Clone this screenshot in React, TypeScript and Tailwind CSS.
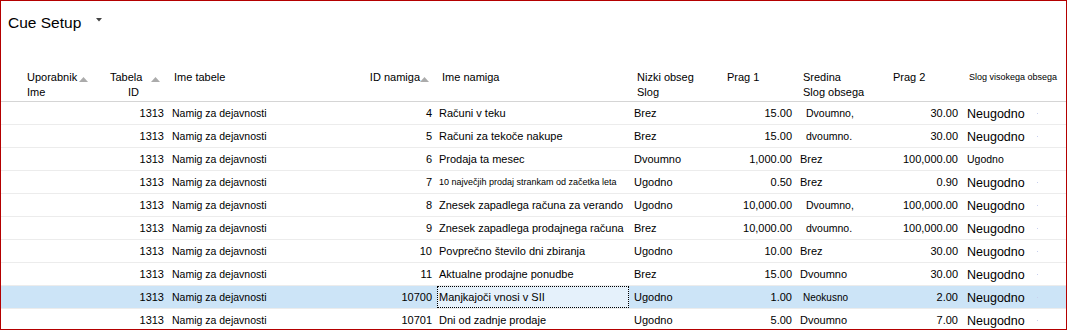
type Row = {
  table: string;
  id: string;
  name: string;
  nameSmall?: boolean;
  low: string;
  p1: string;
  mid: string;
  midShift?: boolean;
  midSmall?: boolean;
  p2: string;
  high: string;
  highSmall?: boolean;
  selected?: boolean;
};

const rows: Row[] = [
  { table: '1313', id: '4', name: 'Računi v teku', low: 'Brez', p1: '15.00', mid: 'Dvoumno,', midShift: true, p2: '30.00', high: 'Neugodno' },
  { table: '1313', id: '5', name: 'Računi za tekoče nakupe', low: 'Brez', p1: '15.00', mid: 'dvoumno.', midShift: true, p2: '30.00', high: 'Neugodno' },
  { table: '1313', id: '6', name: 'Prodaja ta mesec', low: 'Dvoumno', p1: '1,000.00', mid: 'Brez', p2: '100,000.00', high: 'Ugodno', highSmall: true },
  { table: '1313', id: '7', name: '10 največjih prodaj strankam od začetka leta', nameSmall: true, low: 'Ugodno', p1: '0.50', mid: 'Brez', p2: '0.90', high: 'Neugodno' },
  { table: '1313', id: '8', name: 'Znesek zapadlega računa za verando', low: 'Ugodno', p1: '10,000.00', mid: 'Dvoumno,', midShift: true, p2: '100,000.00', high: 'Neugodno' },
  { table: '1313', id: '9', name: 'Znesek zapadlega prodajnega računa', low: 'Brez', p1: '10,000.00', mid: 'dvoumno.', midShift: true, p2: '100,000.00', high: 'Neugodno' },
  { table: '1313', id: '10', name: 'Povprečno število dni zbiranja', low: 'Ugodno', p1: '10.00', mid: 'Brez', p2: '30.00', high: 'Neugodno' },
  { table: '1313', id: '11', name: 'Aktualne prodajne ponudbe', low: 'Brez', p1: '15.00', mid: 'Dvoumno', p2: '30.00', high: 'Neugodno' },
  { table: '1313', id: '10700', name: 'Manjkajoči vnosi v SII', low: 'Ugodno', p1: '1.00', mid: 'Neokusno', midSmall: true, p2: '2.00', high: 'Neugodno', selected: true },
  { table: '1313', id: '10701', name: 'Dni od zadnje prodaje', low: 'Ugodno', p1: '5.00', mid: 'Dvoumno', p2: '7.00', high: 'Neugodno' },
];

const cols = 'grid grid-cols-[99px_68px_192px_77px_192px_83px_84px_84px_82px_1fr]';

function SortUp({ className }: { className?: string }) {
  return (
    <svg width="9" height="5" viewBox="0 0 9 5" className={className}>
      <polygon points="0,5 4.5,0 9,5" fill="#ababab" />
    </svg>
  );
}

function Header() {
  return (
    <div className={`${cols} h-[39px] border-b border-[#d5d5d5] pt-[7px] text-[11px] leading-[15px] text-black`}>
      <div className="pl-[26px]">
        <div className="flex items-center">
          <span>Uporabnik</span>
          <SortUp className="ml-[2px] mt-[3px]" />
        </div>
        <div>Ime</div>
      </div>
      <div className="pl-[10px]">
        <div className="flex items-center">
          <span>Tabela</span>
          <SortUp className="ml-[9px] mt-[3px]" />
        </div>
        <div className="pl-[18px]">ID</div>
      </div>
      <div className="pl-[6px]">Ime tabele</div>
      <div className="flex justify-end pr-[8px]">
        <div className="flex h-[15px] items-center">
          <span>ID namiga</span>
          <SortUp className="mt-[3px]" />
        </div>
      </div>
      <div className="pl-[5px]">Ime namiga</div>
      <div className="pl-[8px]">
        <div>Nizki obseg</div>
        <div>Slog</div>
      </div>
      <div className="pl-[15px]">Prag 1</div>
      <div className="pl-[7px]">
        <div>Sredina</div>
        <div>Slog obsega</div>
      </div>
      <div className="pl-[13px]">Prag 2</div>
      <div className="pl-[7px] text-[9px]">Slog visokega obsega</div>
    </div>
  );
}

function DataRow({ row }: { row: Row }) {
  return (
    <div
      className={`${cols} h-[23px] border-b border-[#ececec] text-[11px] leading-none text-black ${
        row.selected ? 'bg-[#cce4f7]' : 'bg-white'
      }`}
    >
      <div />
      <div className="flex items-center justify-end pr-[4px]">{row.table}</div>
      <div className="flex items-center pl-[4px] text-[10.5px]">Namig za dejavnosti</div>
      <div className="flex items-center justify-end pr-[5px]">{row.id}</div>
      <div
        className={`flex items-center pl-[1px] ${
          row.selected ? 'border border-dotted border-black bg-[#e5f1fb]' : 'border border-transparent'
        } ${row.nameSmall ? 'text-[9px]' : ''}`}
      >
        {row.name}
      </div>
      <div className="flex items-center pl-[5px] pt-[1px]">{row.low}</div>
      <div className="flex items-center justify-end pr-[4px]">{row.p1}</div>
      <div
        className={`flex items-center pt-[1px] ${row.midShift ? 'pl-[10px] text-[10.5px]' : row.midSmall ? 'pl-[7px] text-[10px]' : 'pl-[4px]'}`}
      >
        {row.mid}
      </div>
      <div className="flex items-center justify-end pr-[4px]">{row.p2}</div>
      <div className="flex items-center pl-[5px]">
        {row.highSmall ? (
          <span className="text-[10.5px]">{row.high}</span>
        ) : (
          <>
            <span className="mt-[3px] text-[12.5px]">{row.high}</span>
            <span className="ml-[12px] h-[1px] w-[1px] bg-[#c9d0ee]" />
          </>
        )}
      </div>
    </div>
  );
}

export default function App() {
  return (
    <div className="h-[330px] w-[1067px] overflow-hidden border border-[#b40000] bg-white font-['Liberation_Sans',Arial,sans-serif]">
      <div className="flex h-[62px] items-start pl-[7px] pt-[12px]">
        <h1 className="text-[15.5px] leading-[20px] text-black">Cue Setup</h1>
        <svg width="6" height="4" viewBox="0 0 6 4" className="ml-[15px] mt-[5px]">
          <polygon points="0,0 6,0 3,3.5" fill="#444" />
        </svg>
      </div>
      <Header />
      {rows.map((r) => (
        <DataRow key={r.id} row={r} />
      ))}
    </div>
  );
}
